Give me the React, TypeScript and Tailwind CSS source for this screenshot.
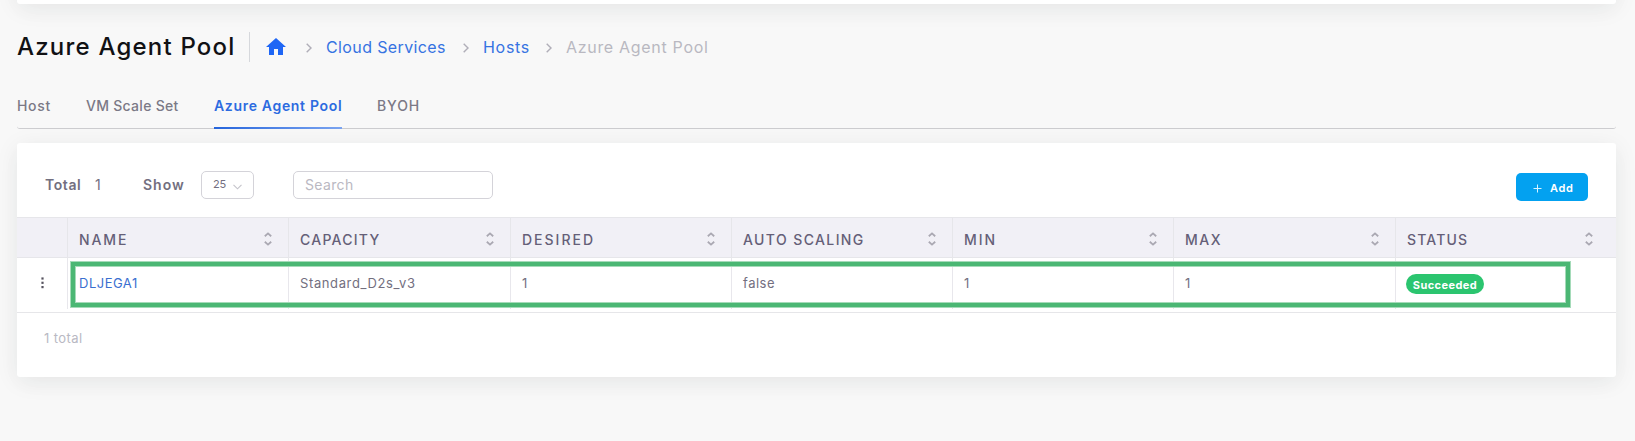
import React from "react";

type Column = { label: string; value: string; labelClass: string; valueClass: string };

const columns: Column[] = [
  { label: "NAME", value: "DLJEGA1", labelClass: "tracking-[1.9px]", valueClass: "tracking-[0.5px] text-[#3a6fd0]" },
  { label: "CAPACITY", value: "Standard_D2s_v3", labelClass: "tracking-[1.26px]", valueClass: "tracking-[0.62px]" },
  { label: "DESIRED", value: "1", labelClass: "tracking-[2px]", valueClass: "" },
  { label: "AUTO SCALING", value: "false", labelClass: "tracking-[1.4px]", valueClass: "tracking-[0.52px]" },
  { label: "MIN", value: "1", labelClass: "tracking-[2px]", valueClass: "" },
  { label: "MAX", value: "1", labelClass: "tracking-[1.5px]", valueClass: "" },
  { label: "STATUS", value: "Succeeded", labelClass: "tracking-[1.16px]", valueClass: "" },
];

const rowGrid = "grid grid-cols-[51px_221px_222px_221px_221px_221px_222px_1fr]";
const shadow = "shadow-[0_4px_24px_0_rgba(34,41,47,0.07),0_8px_24px_0_rgba(0,0,0,0.02)]";

function SortIcon() {
  return (
    <svg className="h-[14px] w-[8px] shrink-0" viewBox="0 0 8 14" fill="none" stroke="#aaa8b2" strokeWidth="1.8">
      <path d="M0.8 4.2 L4 1.4 L7.2 4.2" />
      <path d="M0.8 9.8 L4 12.6 L7.2 9.8" />
    </svg>
  );
}

function Chevron({ className }: { className: string }) {
  return (
    <svg className={`h-[10px] w-[6px] ${className}`} viewBox="0 0 6 10" fill="none" stroke="#b0aeb8" strokeWidth="1.4">
      <path d="M0.7 0.7 L5 5 L0.7 9.3" />
    </svg>
  );
}

function Breadcrumb() {
  return (
    <div className="flex h-[31px] items-center text-base">
      <h1 className="w-[232px] pt-px whitespace-nowrap text-[24px] font-medium tracking-[1.2px] text-[#111114]">
        Azure Agent Pool
      </h1>
      <div className="h-[30px] w-px bg-[#d6d8dc]" />
      <svg className="ml-4 h-[17px] w-5" viewBox="0 0 20 17" fill="#1f66f5">
        <path d="M8 17 V11 H12 V17 H17 V9 H20 L10 0 L0 9 H3 V17 Z" />
      </svg>
      <Chevron className="mt-[2px] ml-[20px]" />
      <a className="ml-[14px] w-[120px] whitespace-nowrap tracking-[0.38px] text-[#3673e2]">Cloud Services</a>
      <Chevron className="mt-[2px] ml-[17px]" />
      <a className="ml-[14px] w-[47px] tracking-[0.7px] text-[#3673e2]">Hosts</a>
      <Chevron className="mt-[2px] ml-[16px]" />
      <span className="ml-[14px] whitespace-nowrap tracking-[0.69px] text-[#b9b8c1]">Azure Agent Pool</span>
    </div>
  );
}

function Tabs() {
  return (
    <div className="mt-[24px] flex h-[43px] rounded-[3px] border-b border-[#cdcdd0] text-sm leading-[40px] font-medium text-[#7b7986]">
      <div className="w-[69px] tracking-[0.7px]">Host</div>
      <div className="w-[128px] tracking-[0.28px]">VM Scale Set</div>
      <div className="-mb-px flex w-[128px] flex-col justify-between whitespace-nowrap font-semibold tracking-[0.68px] text-[#2c6be0]">
        <span>Azure Agent Pool</span>
        <span className="h-[2px] bg-linear-to-r from-[#2565dc] to-[#7ba4f0]" />
      </div>
      <div className="ml-[35px] tracking-[0.9px]">BYOH</div>
    </div>
  );
}

function Toolbar() {
  return (
    <div className="flex h-[74px] items-start pt-[28px] pr-7 pl-7 text-sm text-[#736f7f]">
      <span className="w-[50px] leading-[28px] font-semibold tracking-[0.57px]">Total</span>
      <span className="w-[48px] leading-[28px]">1</span>
      <span className="w-[58px] leading-[28px] font-semibold tracking-[1px]">Show</span>
      <div className="flex h-7 w-[53px] items-center justify-between rounded-[5px] border border-[#d4d3d9] pr-[11px] pl-[11px] text-[11px] tracking-[-0.2px]">
        25
        <svg className="mt-[3px] h-[6px] w-[9px]" viewBox="0 0 9 6" fill="none" stroke="#c4c3ca" strokeWidth="1.1">
          <path d="M0.5 0.8 L4.5 4.8 L8.5 0.8" />
        </svg>
      </div>
      <div className="ml-[39px] h-7 w-[200px] rounded-[5px] border border-[#d4d3d9] pl-[11px] leading-[26px] tracking-[0.36px] text-[#bab8c2]">
        Search
      </div>
      <button className="mt-[2px] ml-auto flex h-7 w-[72px] items-center rounded-[5px] bg-[#03a1f0] pt-[3px] pl-[17px] text-[11px] font-semibold tracking-[0.65px] text-white">
        <svg className="h-[9px] w-[9px]" viewBox="0 0 9 9" stroke="#d8f2ff" strokeWidth="1">
          <path d="M4.5 0.5 V8.5 M0.5 4.5 H8.5" />
        </svg>
        <span className="ml-2">Add</span>
      </button>
    </div>
  );
}

export default function App() {
  return (
    <div className="h-[441px] overflow-hidden bg-[#f8f8f8] pr-[19px] pl-[17px] font-['Inter','Liberation_Sans',sans-serif]">
      <div className={`-mt-20 h-[84px] rounded-b-[3px] bg-white ${shadow}`} />
      <div className="pt-[27px]">
        <Breadcrumb />
        <Tabs />
      </div>

      <div className={`relative mt-[14px] h-[234px] rounded-[3px] bg-white ${shadow}`}>
        <Toolbar />

        <div className={`${rowGrid} h-[41px] border-y border-[#e6e6ea] bg-[#f1f0f6]`}>
          <div className="border-r border-[#e6e6ea]" />
          {columns.map((c, i) => (
            <div
              key={c.label}
              className={`flex items-start justify-between pt-[14px] pl-[11px] ${
                i === 6 ? "pr-[23px]" : "border-r border-[#e6e6ea] pr-[16px]"
              }`}
            >
              <span className={`text-sm leading-[16px] font-medium whitespace-nowrap text-[#655f78] ${c.labelClass}`}>
                {c.label}
              </span>
              <SortIcon />
            </div>
          ))}
        </div>

        <div className="h-[55px] border-b border-[#e6e6e9]">
          <div className={`${rowGrid} h-[51px]`}>
            <div className="flex items-start justify-end border-r border-[#e8e7ec] pt-[19px] pr-[23px]">
              <svg className="h-[12px] w-[3px]" viewBox="0 0 3 12" fill="#56535f">
                <rect x="0.4" y="0.4" width="2.2" height="2.2" />
                <rect x="0.4" y="4.7" width="2.2" height="2.2" />
                <rect x="0.4" y="9" width="2.2" height="2.2" />
              </svg>
            </div>
            {columns.map((c, i) => (
              <div
                key={c.label}
                className={`flex items-start pt-[16px] text-[13px] leading-[18px] text-[#736f7f] ${
                  i === 6 ? "pl-[10px]" : "border-r border-[#e8e7ec] pl-[11px]"
                }`}
              >
                {i === 6 ? (
                  <span className="flex h-5 w-[78px] items-center justify-center rounded-full bg-[#2bc56f] pt-px text-[11px] font-bold tracking-[0.43px] text-white">
                    {c.value}
                  </span>
                ) : (
                  <span className={c.valueClass}>{c.value}</span>
                )}
              </div>
            ))}
          </div>
        </div>

        <div className="pt-[16px] pl-[27px] text-[13px] leading-[18px] tracking-[0.42px] text-[#b9b9c3]">1 total</div>

        <div className="absolute top-[118px] left-[53px] h-[47px] w-[1501px] border border-[#a5dbb9]">
          <div className="h-full border-4 border-[#4bb774]">
            <div className="h-full border border-[#a5dbb9]" />
          </div>
        </div>
      </div>
    </div>
  );
}
